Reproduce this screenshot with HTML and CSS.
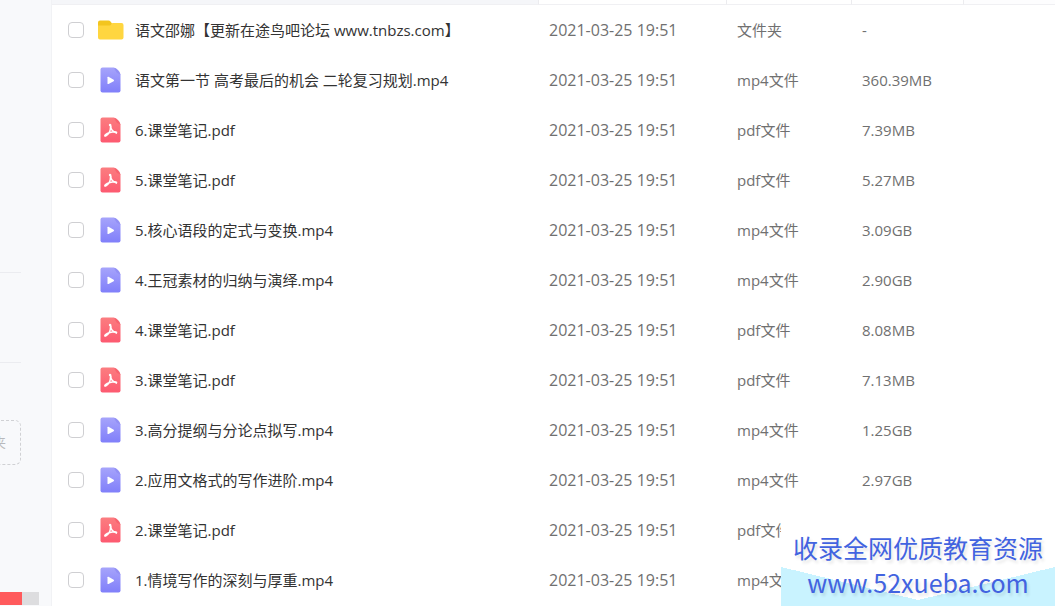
FILE: index.html
```
<!DOCTYPE html>
<html lang="zh-CN">
<head>
    <meta charset="UTF-8">
    <meta name="viewport" content="width=device-width, initial-scale=1.0">
    <title>文件列表</title>
    <link rel="stylesheet" href="styles.css">
</head>
<body>
    <!-- 图标 -->
    <svg class="sprite" width="0" height="0" aria-hidden="true">
        <defs>
            <linearGradient id="mp4-bg" x1="0" y1="0" x2="0" y2="1">
                <stop offset="0" stop-color="#a6a4fb"/>
                <stop offset="1" stop-color="#807ffa"/>
            </linearGradient>
            <linearGradient id="pdf-bg" x1="0" y1="0" x2="0" y2="1">
                <stop offset="0" stop-color="#fb7d80"/>
                <stop offset="1" stop-color="#fd5a70"/>
            </linearGradient>
        </defs>
        <symbol id="icon-folder" viewBox="0 0 26 26">
            <path d="M0 5.500Q0 3.500 2 3.500H10.500Q11.800 3.500 12.500 4.600L14 6.500V12H0Z" fill="#f3c51f"/>
            <path d="M0 8.500H11.500Q12.800 8.500 13.300 7.200Q13.700 6 15 6H23.500Q25.500 6 25.500 8V20.500Q25.500 22.500 23.500 22.500H2Q0 22.500 0 20.500Z" fill="#ffd640"/>
        </symbol>
        <symbol id="icon-mp4" viewBox="0 0 26 26">
            <path d="M4.500 .5H15.500L22.500 7.500V23.500Q22.500 25.500 20.500 25.500H4.500Q2.500 25.500 2.500 23.500V2.500Q2.500 .5 4.500 .5Z" fill="url(#mp4-bg)"/>
            <path d="M15.500 .5Q18 .7 20 2.900Q22.300 5 22.500 7.500L19 6Z" fill="#9290f5"/>
            <path d="M9.500 10.300Q9.500 9.300 10.500 9.800L15.700 12.800Q16.500 13.500 15.700 14.200L10.500 17Q9.500 17.400 9.500 16.400Z" fill="#fff"/>
        </symbol>
        <symbol id="icon-pdf" viewBox="0 0 26 26">
            <path d="M4.500 .5H15.500L22.500 7.500V23.500Q22.500 25.500 20.500 25.500H4.500Q2.500 25.500 2.500 23.500V2.500Q2.500 .5 4.500 .5Z" fill="url(#pdf-bg)"/>
            <path d="M15.500 .5Q18 .7 20 2.900Q22.300 5 22.500 7.500L19 6Z" fill="#f8636f"/>
            <g fill="none" stroke="#fff" stroke-width="1.500" stroke-linecap="round" stroke-linejoin="round">
                <path d="M11.800 8.500C11 7.400 12.900 7 12.700 8.700C12.500 11 14 14.200 18.200 15.900"/>
                <path d="M12.600 9.500C12.500 14 10.500 17.500 7.600 19C5.500 19.500 7.500 16.300 12 15.400C15 14.700 19.500 14.300 18.400 15.900"/>
            </g>
        </symbol>
    </svg>

    <div class="page">
        <aside class="sidebar">
            <div class="divider"></div>
            <div class="divider"></div>
            <div class="drop-box">夹</div>
            <div class="quota"><div class="quota-used"></div></div>
        </aside>

        <main class="content">
            <table class="file-table">
                <colgroup>
                    <col class="col-name">
                    <col class="col-date">
                    <col class="col-type">
                    <col class="col-size">
                    <col class="col-more">
                </colgroup>
                <thead>
                    <tr><th></th><th></th><th></th><th></th><th></th></tr>
                </thead>
                <tbody>
                    <tr>
                        <td><div class="name"><input type="checkbox" id="f1"><svg class="icon"><use href="#icon-folder"/></svg><label for="f1">语文邵娜【更新在途鸟吧论坛 www.tnbzs.com】</label></div></td>
                        <td class="date">2021-03-25 19:51</td><td>文件夹</td><td>-</td><td></td>
                    </tr>
                    <tr>
                        <td><div class="name"><input type="checkbox" id="f2"><svg class="icon"><use href="#icon-mp4"/></svg><label for="f2">语文第一节 高考最后的机会 二轮复习规划.mp4</label></div></td>
                        <td class="date">2021-03-25 19:51</td><td>mp4文件</td><td>360.39MB</td><td></td>
                    </tr>
                    <tr>
                        <td><div class="name"><input type="checkbox" id="f3"><svg class="icon"><use href="#icon-pdf"/></svg><label for="f3">6.课堂笔记.pdf</label></div></td>
                        <td class="date">2021-03-25 19:51</td><td>pdf文件</td><td>7.39MB</td><td></td>
                    </tr>
                    <tr>
                        <td><div class="name"><input type="checkbox" id="f4"><svg class="icon"><use href="#icon-pdf"/></svg><label for="f4">5.课堂笔记.pdf</label></div></td>
                        <td class="date">2021-03-25 19:51</td><td>pdf文件</td><td>5.27MB</td><td></td>
                    </tr>
                    <tr>
                        <td><div class="name"><input type="checkbox" id="f5"><svg class="icon"><use href="#icon-mp4"/></svg><label for="f5">5.核心语段的定式与变换.mp4</label></div></td>
                        <td class="date">2021-03-25 19:51</td><td>mp4文件</td><td>3.09GB</td><td></td>
                    </tr>
                    <tr>
                        <td><div class="name"><input type="checkbox" id="f6"><svg class="icon"><use href="#icon-mp4"/></svg><label for="f6">4.王冠素材的归纳与演绎.mp4</label></div></td>
                        <td class="date">2021-03-25 19:51</td><td>mp4文件</td><td>2.90GB</td><td></td>
                    </tr>
                    <tr>
                        <td><div class="name"><input type="checkbox" id="f7"><svg class="icon"><use href="#icon-pdf"/></svg><label for="f7">4.课堂笔记.pdf</label></div></td>
                        <td class="date">2021-03-25 19:51</td><td>pdf文件</td><td>8.08MB</td><td></td>
                    </tr>
                    <tr>
                        <td><div class="name"><input type="checkbox" id="f8"><svg class="icon"><use href="#icon-pdf"/></svg><label for="f8">3.课堂笔记.pdf</label></div></td>
                        <td class="date">2021-03-25 19:51</td><td>pdf文件</td><td>7.13MB</td><td></td>
                    </tr>
                    <tr>
                        <td><div class="name"><input type="checkbox" id="f9"><svg class="icon"><use href="#icon-mp4"/></svg><label for="f9">3.高分提纲与分论点拟写.mp4</label></div></td>
                        <td class="date">2021-03-25 19:51</td><td>mp4文件</td><td>1.25GB</td><td></td>
                    </tr>
                    <tr>
                        <td><div class="name"><input type="checkbox" id="f10"><svg class="icon"><use href="#icon-mp4"/></svg><label for="f10">2.应用文格式的写作进阶.mp4</label></div></td>
                        <td class="date">2021-03-25 19:51</td><td>mp4文件</td><td>2.97GB</td><td></td>
                    </tr>
                    <tr>
                        <td><div class="name"><input type="checkbox" id="f11"><svg class="icon"><use href="#icon-pdf"/></svg><label for="f11">2.课堂笔记.pdf</label></div></td>
                        <td class="date">2021-03-25 19:51</td><td>pdf文件</td><td></td><td></td>
                    </tr>
                    <tr>
                        <td><div class="name"><input type="checkbox" id="f12"><svg class="icon"><use href="#icon-mp4"/></svg><label for="f12">1.情境写作的深刻与厚重.mp4</label></div></td>
                        <td class="date">2021-03-25 19:51</td><td>mp4文件</td><td></td><td></td>
                    </tr>
                </tbody>
            </table>
        </main>
    </div>

    <!-- 右下角水印 -->
    <div class="watermark">
        <div class="slogan">收录全网优质教育资源</div>
        <div class="site">www.52xueba.com</div>
    </div>
</body>
</html>
```
FILE: styles.css
```
* {
    box-sizing: border-box;
}
body {
    margin: 0;
    font-family: "Open Sans", "Noto Sans CJK SC", sans-serif;
    font-size: 15px;
    color: #707070;
    background: #fff;
    overflow: hidden;
}
.sprite {
    position: absolute;
}
.page {
    display: flex;
    height: 100vh;
}
.sidebar {
    flex: 0 0 52px;
    display: flex;
    flex-direction: column;
    background: #f8f9fb;
    border-right: 1px solid #f1f2f5;
    overflow: hidden;
}
.divider {
    width: 21px;
    height: 1px;
    margin-bottom: 89px;
    background: #ebecf0;
}
.divider:first-child {
    margin-top: 272px;
}
.divider + .divider {
    margin-bottom: 57px;
}
.drop-box {
    width: 31px;
    height: 45px;
    margin-left: -10px;
    padding-left: 2px;
    border: 1px dashed #d0d1d4;
    border-radius: 6px;
    font-size: 13px;
    line-height: 43px;
    color: #b8b9bc;
}
.quota {
    width: 39px;
    height: 13px;
    margin-top: auto;
    margin-bottom: 1px;
    background: #dddddf;
}
.quota-used {
    width: 56%;
    height: 100%;
    background: #ff5a5c;
}
.content {
    flex: 1;
    min-width: 0;
}
.file-table {
    width: 100%;
    table-layout: fixed;
    border-collapse: separate;
    border-spacing: 0;
}
.col-date {
    width: 188px;
}
.col-type {
    width: 125px;
}
.col-size {
    width: 112px;
}
.col-more {
    width: 91px;
}
th {
    height: 5px;
    padding: 0;
    border-right: 1px solid #ececef;
    border-bottom: 1px solid #f0f0f3;
}
th:first-child {
    background: #f5f6f9;
}
th:last-child {
    background: #fdfdfe;
    border-right: none;
}
td {
    height: 50px;
    padding: 0 10px;
    white-space: nowrap;
    line-height: 20px;
}
td:first-child {
    padding-left: 16px;
}
.date {
    font-size: 16px;
}
.name {
    display: flex;
    align-items: center;
    color: #333;
}
.name input {
    appearance: none;
    width: 16px;
    height: 16px;
    margin: 0 14px 0 0;
    border: 1px solid #cfcfd2;
    border-radius: 4px;
    background: #fff;
}
.name input:checked {
    background: #807ffa;
}
.icon {
    width: 26px;
    height: 26px;
    margin-right: 11px;
}
.watermark {
    position: fixed;
    right: 0;
    bottom: 0;
    width: 274px;
    height: 84px;
    padding-top: 8px;
    background: linear-gradient(#c9f3ff, #c9f3ff) left bottom / 100% 6px no-repeat,
                linear-gradient(to top right, #c9f3ff 50%, transparent 50%) left 0 top 45px / 50% 33px no-repeat,
                linear-gradient(to top left, #c9f3ff 50%, transparent 50%) right 0 top 45px / 50% 33px no-repeat,
                #fff;
    font-family: "Noto Sans CJK SC", sans-serif;
    font-size: 25px;
    line-height: 35px;
    text-align: center;
    color: #4263e0;
    text-shadow: 2px 3px 3px rgba(0, 0, 0, 0.1);
}
```
